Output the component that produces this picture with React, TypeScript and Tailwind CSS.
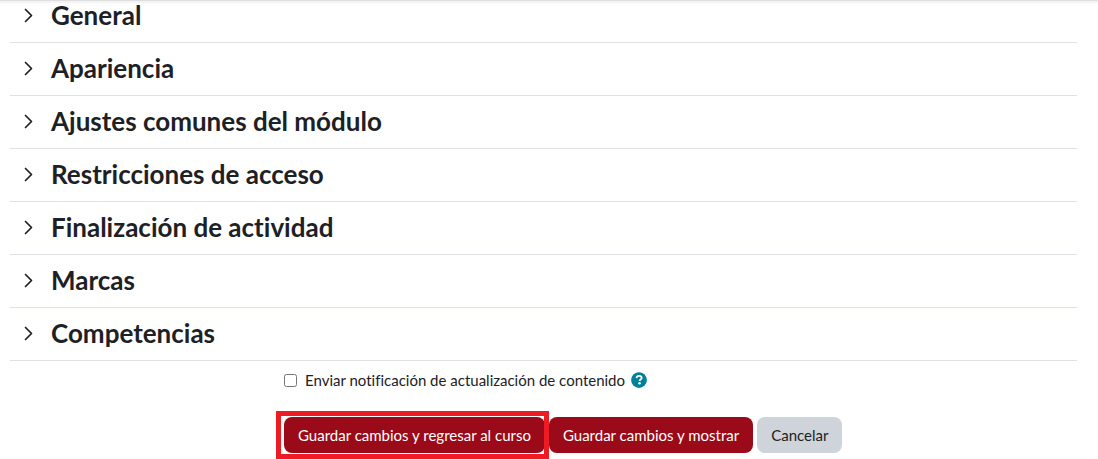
import { useState } from "react";

const sections = [
  "General",
  "Apariencia",
  "Ajustes comunes del módulo",
  "Restricciones de acceso",
  "Finalización de actividad",
  "Marcas",
  "Competencias",
];

function Section({ title }: { title: string }) {
  const [open, setOpen] = useState(false);
  return (
    <section className="border-b border-[#dee2e6] pt-[7px] pb-[9px]">
      <h3 className="flex h-9 items-center">
        <button
          type="button"
          aria-expanded={open}
          onClick={() => setOpen(!open)}
          className="flex items-center gap-[17px] pl-3 text-[26px] leading-8 font-bold text-[#1d2125]"
        >
          <svg
            viewBox="0 0 12 16"
            className={open ? "h-4 w-3 rotate-90" : "h-4 w-3"}
            fill="none"
            stroke="currentColor"
            strokeWidth="1.7"
            strokeLinecap="round"
            strokeLinejoin="round"
            aria-hidden="true"
          >
            <path d="M3.5 2.5l6 6-6 6" />
          </svg>
          {title}
        </button>
      </h3>
    </section>
  );
}

export default function App() {
  return (
    <main className="border-t border-[#dedede] bg-white pr-[21px] pb-1.5 pl-[10px] font-['Lato',sans-serif] text-[#1d2125] [font-variant-ligatures:none] shadow-[inset_0_2px_1px_#f3f3f3]">
      <form onSubmit={(e) => e.preventDefault()}>
        <div className="-mt-3 pt-px">
          {sections.map((title) => (
            <Section key={title} title={title} />
          ))}
        </div>
        <div className="flex flex-col gap-[25px] pt-[7px] pl-[274px]">
          <div className="flex h-6 items-center">
            <label className="flex items-center gap-2 text-[15px]">
              <input type="checkbox" className="size-[13px]" />
              Enviar notificación de actualización de contenido
            </label>
            <button
              type="button"
              aria-label="Ayuda"
              className="ml-1.5 size-4 rounded-full"
            >
              <svg viewBox="0 0 512 512" className="size-4" aria-hidden="true">
                <circle cx="256" cy="256" r="252" fill="#008196" />
                <path
                  d="M176 196c4-46 36-74 84-74 46 0 80 27 80 66 0 55-64 53-64 100"
                  fill="none"
                  stroke="#fff"
                  strokeWidth="58"
                />
                <circle cx="274" cy="363" r="40" fill="#fff" />
              </svg>
            </button>
          </div>
          <div className="flex items-center gap-1 text-[15px]">
            <div className="relative">
              <button type="submit" className="h-9 rounded-lg bg-[#9b0a18] px-3.5 text-white">
                Guardar cambios y regresar al curso
              </button>
              <span className="pointer-events-none absolute -top-1.5 -right-1 -bottom-1.5 -left-2 border-5 border-[#ed1c24]" />
            </div>
            <button type="submit" className="h-9 rounded-lg bg-[#9b0a18] px-3.5 text-white">
              Guardar cambios y mostrar
            </button>
            <button type="button" className="h-9 rounded-lg bg-[#ced4da] px-3.5">
              Cancelar
            </button>
          </div>
        </div>
      </form>
    </main>
  );
}
